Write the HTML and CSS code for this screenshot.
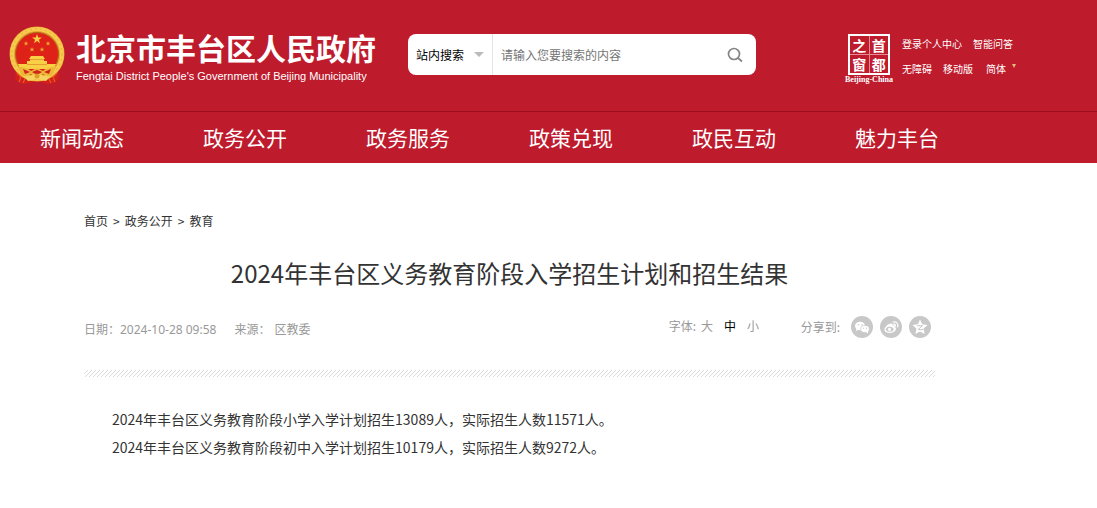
FILE: index.html
```html
<!DOCTYPE html>
<html lang="zh-CN">
<head>
<meta charset="utf-8">
<title>2024年丰台区义务教育阶段入学招生计划和招生结果</title>
<link rel="stylesheet" href="styles.css">
</head>
<body>
<header class="site-header">
  <div class="masthead">
    <a class="brand" href="#">
      <svg class="emblem" viewBox="0 0 56 60" aria-hidden="true">
        <path d="M7 41 L6 52 L10 57 L17 58 L28 55 L39 58 L46 57 L50 52 L49 41Z" fill="#d2201b"/>
        <circle cx="28" cy="28" r="27.500" fill="#e3a22c"/>
        <circle cx="28" cy="28" r="25" fill="none" stroke="#f7cb4f" stroke-width="4"/>
        <circle cx="28" cy="28" r="25" fill="none" stroke="#e9ae35" stroke-width="1" stroke-dasharray="2 3"/>
        <circle cx="28" cy="28" r="21.500" fill="#de2218" stroke="#b5641c" stroke-width="1"/>
        <path d="M28 8l1.200 3.500h3.700l-3 2.200 1.100 3.600-3-2.200-3 2.200 1.100-3.600-3-2.200h3.700z" fill="#f8cf45"/>
        <path id="star" d="M17 15l.6 1.700h1.800l-1.400 1.100.5 1.800-1.500-1.100-1.500 1.100.5-1.800-1.400-1.100h1.800z" fill="#f0aa34"/>
        <use href="#star" x="22"/><use href="#star" x="6" y="6"/><use href="#star" x="16" y="6"/>
        <path d="M22 30h12l2 3H20zM21 33h14v2h3v3h9l-2 5H11l-2-5h9v-3h3z" fill="#f8cf45"/>
        <path d="M21 33.500h14M18 38.500h20" stroke="#e0912a" stroke-width=".8"/>
        <path d="M9 41q9 0 13 4l6-3 6 3q4-4 13-4l-4 9q-6 0-9-2l-6 4-6-4q-3 2-9 2z" fill="#efb738"/>
        <path d="M15 50q8 1 13-4 5 5 13 4l-4 5q-5 0-9-3-4 3-9 3z" fill="#f5d362"/>
        <path d="M14 43l7 3-5 2zM42 43l-7 3 5 2zM23 46l5-2 5 2-5 3z" fill="#cf261c"/>
        <circle cx="28" cy="50" r="2.500" fill="#e39c28"/>
        <path d="M8 47l4 4-2 5M48 47l-4 4 2 5M16 53l-2 4M40 53l2 4" stroke="#e95a25" stroke-width="1.200" fill="none"/>
      </svg>
      <span class="brand-text">
        <span class="brand-name">北京市丰台区人民政府</span>
        <span class="brand-en">Fengtai District People's Government of Beijing Municipality</span>
      </span>
    </a>
    <form class="search">
      <span class="scope">
        <select class="scope-select" aria-label="搜索范围"><option>站内搜索</option></select>
        <svg class="scope-arrow" viewBox="0 0 10 5" aria-hidden="true"><path d="M0 0h10L5 5z"/></svg>
      </span>
      <input class="search-input" type="text" placeholder="请输入您要搜索的内容" aria-label="搜索内容">
      <button class="search-button" type="button" aria-label="搜索">
        <svg viewBox="0 0 16 16" width="16" height="16" fill="none" stroke="#858585" stroke-width="1.700"><circle cx="7" cy="7" r="5.500"/><path d="M11 11l4 3.500"/></svg>
      </button>
    </form>
    <a class="capital" href="#">
      <span class="seal"><span>之</span><span>首</span><span>窗</span><span>都</span></span>
      <span class="capital-en">Beijing-China</span>
    </a>
    <div class="tools">
      <div class="tools-row"><a href="#">登录个人中心</a><a href="#">智能问答</a></div>
      <div class="tools-row"><a href="#">无障碍</a><a href="#">移动版</a><a class="language" href="#">简体<svg class="language-arrow" viewBox="0 0 4 4" aria-hidden="true"><path d="M0 0h4L2 4z"/></svg></a></div>
    </div>
  </div>
  <nav class="main-nav">
    <a href="#">新闻动态</a><a href="#">政务公开</a><a href="#">政务服务</a><a href="#">政策兑现</a><a href="#">政民互动</a><a href="#">魅力丰台</a>
  </nav>
</header>
<main class="article">
  <nav class="breadcrumb"><a href="#">首页</a><span>&gt;</span><a href="#">政务公开</a><span>&gt;</span><a href="#">教育</a></nav>
  <h1 class="title">2024年丰台区义务教育阶段入学招生计划和招生结果</h1>
  <div class="meta">
    <div class="source"><span>日期：2024-10-28 09:58</span><span class="origin"><span>来源：</span><span>区教委</span></span></div>
    <div class="sizes"><span>字体:</span><button type="button">大</button><button class="current" type="button">中</button><button type="button">小</button></div>
    <div class="share">
      <span class="share-label">分享到:</span>
      <a href="#" aria-label="微信"><svg viewBox="0 0 22 22"><circle cx="11" cy="11" r="11" fill="#c8c8c8"/><ellipse cx="9" cy="10" rx="5" ry="4.200" fill="#fff"/><path d="M5.500 12l-.5 3 3-1.500z" fill="#fff"/><ellipse cx="14" cy="13" rx="4.300" ry="3.600" fill="#fff" stroke="#c8c8c8" stroke-width=".7"/><path d="M15 16l2 1.500V14z" fill="#fff"/><g fill="#c8c8c8"><circle cx="7.500" cy="8.800" r=".7"/><circle cx="11" cy="8.800" r=".7"/><circle cx="12.600" cy="12.200" r=".6"/><circle cx="15.500" cy="12.200" r=".6"/></g></svg></a>
      <a href="#" aria-label="微博"><svg viewBox="0 0 22 22"><circle cx="11" cy="11" r="11" fill="#c8c8c8"/><path d="M9.500 8c2-1 3.500-.5 3 1.500 2-.6 3 0 2.300 1.500 3 2-.3 6-5 6-4.500 0-6.800-3-4.300-6C7 9 9 7 9.500 8.500z" fill="#fff"/><ellipse cx="9.700" cy="13.200" rx="3.800" ry="2.500" fill="#c8c8c8"/><circle cx="9.500" cy="13.300" r="1.600" fill="#fff"/><path d="M13 6c3.500-.8 5.500 1.500 4.600 5M13.300 8.200c1.800-.3 2.600.7 2.200 2" fill="none" stroke="#fff" stroke-width="1.100" stroke-linecap="round"/></svg></a>
      <a href="#" aria-label="QQ空间"><svg viewBox="0 0 22 22"><circle cx="11" cy="11" r="11" fill="#c8c8c8"/><path d="M11 3.500l2.200 4.800 5.300.7-3.900 3.600 1 5.400-4.600-2.500L6.400 18l1-5.400L3.500 9l5.300-.7z" fill="#fff"/><path d="M8 9.700h5.500l-4.300 3.700c1.800.5 3.500.4 5.300 0" fill="none" stroke="#c8c8c8" stroke-width="1"/></svg></a>
    </div>
  </div>
  <div class="divider"></div>
  <div class="content">
    <p>2024年丰台区义务教育阶段小学入学计划招生13089人，实际招生人数11571人。</p>
    <p>2024年丰台区义务教育阶段初中入学计划招生10179人，实际招生人数9272人。</p>
  </div>
</main>
</body>
</html>
```
FILE: styles.css
```css
* { box-sizing: border-box; }
body {
  margin: 0;
  background: #fff;
  color: #333;
  font: 12px/20px "Noto Sans CJK SC", sans-serif;
}
a { color: inherit; text-decoration: none; }
button, input, select { font: inherit; border: 0; padding: 0; background: none; }
p { margin: 0; }
svg { display: block; }

.site-header { background: #be1b2d; color: #fff; }
.masthead { display: flex; align-items: flex-start; padding: 26px 0 25px 9px; }

.brand { display: flex; gap: 11px; width: 399px; }
.emblem { width: 56px; height: 60px; flex: none; }
.brand-text { display: flex; flex-direction: column; white-space: nowrap; }
.brand-name { font-size: 30px; line-height: 42px; font-weight: 700; }
.brand-en { font: 11px/16px "Liberation Sans", Arial, sans-serif; }

.search {
  display: flex;
  width: 348px;
  height: 41px;
  margin-top: 8px;
  background: #fff;
  border-radius: 8px;
}
.scope { display: flex; align-items: center; width: 85px; padding: 0 8px; border-right: 1px solid #e4e4e4; }
.scope-select { appearance: none; flex: 1; width: 58px; color: #000; }
.scope-arrow { width: 10px; height: 5px; fill: #bbb; }
.search-input { flex: 1; min-width: 0; padding: 0 8px; color: #333; }
.search-input::placeholder { color: #757575; opacity: 1; }
.search-button { display: flex; align-items: center; justify-content: center; width: 42px; }

.capital { display: flex; flex-direction: column; align-items: center; width: 48px; margin: 8px 0 0 89px; }
.seal {
  display: grid;
  grid-template-columns: 1fr 1fr;
  gap: 1px;
  width: 42px;
  border: 2px solid #fff;
  background: #e68a94;
  font: 700 14px/18px "Noto Sans CJK SC", sans-serif;
  text-align: center;
}
.seal span { background: #be1b2d; }
.capital-en { font: 700 8px/9px "Liberation Serif", serif; white-space: nowrap; }

.tools { margin: 5px 0 0 9px; font-size: 10px; line-height: 25px; white-space: nowrap; }
.tools-row { display: flex; gap: 11px; }
.language { display: flex; gap: 6px; padding-left: 2px; }
.language-arrow { width: 4px; height: 4px; margin-top: 8px; fill: #e5b779; }

.main-nav {
  display: grid;
  grid-template-columns: repeat(6, minmax(0, 163px));
  padding-left: 40px;
  border-top: 1px solid #9a1021;
  font-size: 21px;
  line-height: 51px;
  white-space: nowrap;
}

.article { max-width: 935px; padding: 48px 0 40px 84px; }
.breadcrumb { display: flex; gap: 5px; }
.title { margin: 24px 0 25px; font-size: 24px; line-height: 36px; font-weight: 400; text-align: center; }
.meta { display: flex; align-items: flex-start; color: #999; }
.source { display: flex; gap: 18px; flex: 1; padding-top: 4px; font-family: "Noto Sans", "Noto Sans CJK SC", sans-serif; }
.origin { display: flex; gap: 4px; }
.sizes { display: flex; gap: 5px; width: 132px; }
.sizes button { width: 12px; margin-right: 6px; color: #999; }
.sizes .current { color: #000; }
.share { display: flex; align-items: center; gap: 7px; padding-right: 4px; }
.share-label { margin-right: 4px; }
.share svg { width: 22px; height: 22px; }
.divider {
  height: 7px;
  margin-top: 30px;
  background: linear-gradient(135deg, #dcdcdc 12%, #fff 12% 38%, #dcdcdc 38% 62%, #fff 62% 88%, #dcdcdc 88%) 0 0 / 4px 4px;
}
.content { margin-top: 28px; font-size: 14px; line-height: 28px; }
.content p { text-indent: 2em; }
```
